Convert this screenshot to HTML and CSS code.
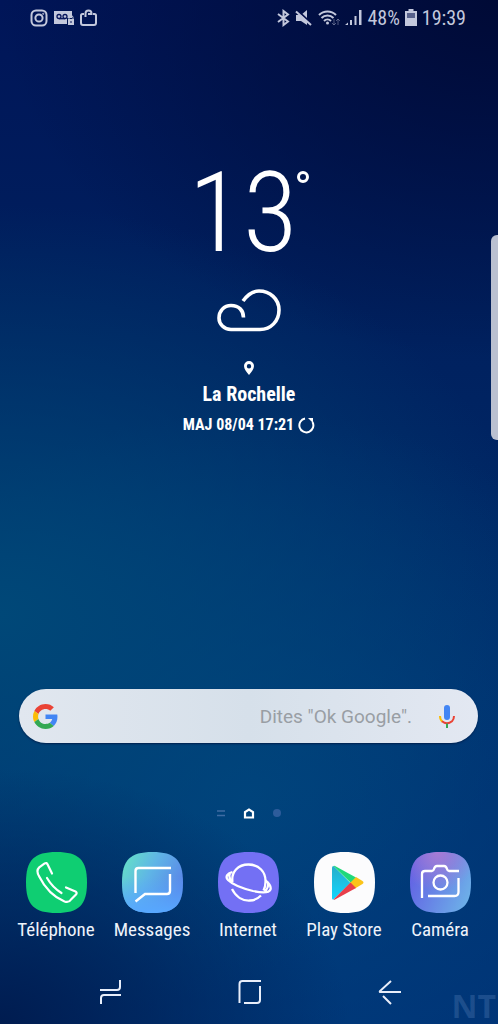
FILE: index.html
```html
<!DOCTYPE html>
<html lang="fr">
<head>
<meta charset="utf-8">
<meta name="viewport" content="width=device-width, initial-scale=1">
<title>Accueil</title>
<link rel="stylesheet" href="styles.css">
</head>
<body>
<div class="screen">
  <header class="status">
    <div class="status-group">
      <svg width="18" height="18" viewBox="0 0 18 18" fill="none" stroke="currentColor" stroke-width="2"><rect x="1.5" y="1.5" width="15" height="15" rx="4.5"/><circle cx="9" cy="9" r="3.6"/><circle cx="13.2" cy="4.8" r=".6" stroke-width="1"/></svg>
      <svg width="20" height="18" viewBox="0 0 20 18"><path d="M0 2h18v7h-5v6H0z" fill="currentColor"/><g fill="none" stroke="#06145a" stroke-width="1.3"><circle cx="5" cy="7.5" r="2"/><circle cx="11" cy="7.5" r="2"/><path d="M5 9.7h6"/></g><path d="M14 10h6v6h-6z" fill="currentColor"/><path d="M15 10V8.5a2 2 0 0 1 4 0V10" fill="none" stroke="currentColor"/><path d="M16.5 12h1v2h-1z" fill="#06145a"/></svg>
      <svg width="17" height="18" viewBox="0 0 17 18" fill="none" stroke="currentColor" stroke-width="2"><path d="M4 5H2.500Q1 5 1 6.500V14q0 2 2 2h11q2 0 2-2V6.500Q16 5 14.500 5H13M5.500 8V4.500a3 3 0 0 1 6 0V5H8"/></svg>
    </div>
    <div class="status-group status-right">
      <svg width="13" height="18" viewBox="0 0 13 18" fill="none" stroke="currentColor" stroke-width="2"><path d="M1 5l10 7.500L6.500 16V2L11 5.500 1 13"/></svg>
      <svg width="18" height="18" viewBox="0 0 18 18"><path d="M1 6h5l6-5v15l-6-4H1z" fill="currentColor"/><path d="M3 2l14 13" stroke="#040f48" stroke-width="2"/><path d="M1 2.500L16 16" stroke="currentColor" stroke-width="2"/></svg>
      <svg width="22" height="18" viewBox="0 0 22 18" fill="none" stroke="currentColor" stroke-width="2"><path d="M1 6a12 12 0 0 1 17 0M3.500 9a8.500 8.500 0 0 1 12 0M6 12a5 5 0 0 1 7 0"/><circle cx="9.500" cy="14" r="1.500" fill="currentColor" stroke="none"/><path d="M16 10v6M14 14l2 2 2-2M20 16v-6M18 12l2-2 2 2" stroke-width="1" opacity=".4"/></svg>
      <svg width="17" height="18" viewBox="0 0 17 18" fill="currentColor"><path d="M0 16h3v-2.500zM5 16h2v-5H5zM9.500 16h2V7h-2zM14 16h2.500V1H14z"/></svg>
      <span>48%</span>
      <svg width="12" height="18" viewBox="0 0 12 18"><path d="M3.500 0h5v2H12v15H0V2h3.500z" fill="currentColor"/><path d="M2 4h8v5H2z" fill="#57618b"/></svg>
      <time>19:39</time>
    </div>
  </header>

  <main class="home">
    <section class="weather" aria-label="Météo">
      <div class="temp">13<span class="degree" aria-label="degrés"></span></div>
      <svg class="cloud" width="64" height="44" viewBox="0 0 64 44" fill="none" stroke="currentColor" stroke-width="3.600"><path d="M26 12C31 5 37 2 42 2c11 0 20 8 20 19 0 11-8 19.500-19 19.500H14C7 40.500 2 35 2 29c0-7 5-12.500 12-12.500 8 0 12.500 5 12.500 12"/></svg>
      <svg class="pin" width="12" height="14" viewBox="0 0 12 14"><path fill="currentColor" fill-rule="evenodd" d="M6 0a5 5 0 0 1 5 5c0 3-2.500 6-5 9-2.500-3-5-6-5-9a5 5 0 0 1 5-5zm0 3a2.200 2.200 0 1 0 0 4.400A2.200 2.200 0 0 0 6 3z"/></svg>
      <div class="city">La Rochelle</div>
      <button class="update" type="button">MAJ 08/04 17:21
        <svg width="17" height="17" viewBox="0 0 17 17" fill="none" stroke="currentColor" stroke-width="2"><path d="M7 1.500A7 7 0 1 0 14.500 5"/><path d="M10 1h5v5z" fill="currentColor" stroke="none"/></svg>
      </button>
    </section>

    <form class="search">
      <svg width="25" height="25" viewBox="0 0 48 48" aria-hidden="true"><path fill="#ea4335" d="M24 9.500c3.540 0 6.710 1.220 9.210 3.600l6.850-6.850C35.900 2.380 30.470 0 24 0 14.620 0 6.510 5.380 2.560 13.220l7.980 6.190C12.430 13.720 17.740 9.500 24 9.500z"/><path fill="#4285f4" d="M46.980 24.550c0-1.570-.15-3.090-.38-4.550H24v9.020h12.940c-.58 2.960-2.260 5.480-4.780 7.180l7.730 6c4.510-4.180 7.090-10.360 7.090-17.650z"/><path fill="#fbbc05" d="M10.530 28.590A14.500 14.500 0 0 1 9.770 24c0-1.600.27-3.140.76-4.590l-7.980-6.190A23.900 23.900 0 0 0 0 24c0 3.880.92 7.540 2.560 10.780z"/><path fill="#34a853" d="M24 48c6.480 0 11.930-2.130 15.890-5.810l-7.730-6c-2.150 1.450-4.920 2.300-8.160 2.300-6.260 0-11.570-4.220-13.470-9.910l-7.980 6.190C6.510 42.620 14.620 48 24 48z"/></svg>
      <input class="search-input" type="text" aria-label="Recherche Google" placeholder="Dites &quot;Ok Google&quot;.">
      <button class="mic" type="button" aria-label="Recherche vocale">
        <svg width="16" height="23" viewBox="0 0 16 23"><rect x="5" y="0" width="6" height="15" rx="3" fill="#4285f4"/><path d="M1 11c0 3 1 4.500 2.500 5.700" fill="none" stroke="#fbbc05" stroke-width="2"/><path d="M3 16.300c3 2.500 7 2.500 10 0 1.300-1.300 2-3 2-5.300" fill="none" stroke="#ea4335" stroke-width="2"/><path d="M8 18.500V23" stroke="#34a853" stroke-width="2"/></svg>
      </button>
    </form>

    <div class="pages">
      <svg width="10" height="12" viewBox="0 0 10 12" stroke="#3f6ca3" stroke-width="1.500"><path d="M1 4h8M1 8.500h8"/></svg>
      <svg width="12" height="12" viewBox="0 0 12 12" fill="none" stroke="currentColor" stroke-width="2.200"><path d="M2 10.500V5.200L6 2.500l4 2.700v5.300z"/></svg>
      <svg width="10" height="12" viewBox="0 0 10 12"><circle cx="5" cy="6" r="4" fill="#2d5c9b"/></svg>
    </div>

    <nav class="dock" aria-label="Applications">
      <a class="app" href="#telephone">
        <svg class="icon" viewBox="0 0 61 61" fill="none" stroke="#fff" stroke-width="2.200" stroke-linecap="round" stroke-linejoin="round"><path stroke="none" fill="#0fce72" d="M30.500 0C53 0 61 8 61 30.500S53 61 30.500 61 0 53 0 30.500 8 0 30.500 0z"/><path d="M26 21.500l-4.500-9.300q-1-1.800-2.800-.8l-5.500 4q-3.500 3.500 0 9C18 34 27 44.500 38.500 49.500q4.500 1.500 6.500-2l5-5q1.500-1.800-.5-3L40 35.500M21 26c3.500 6 8 11 14.500 15"/></svg>
        <span>Téléphone</span>
      </a>
      <a class="app" href="#messages">
        <svg class="icon" viewBox="0 0 61 61" fill="none" stroke="#fff" stroke-width="2.400"><defs><linearGradient id="msg-a" x1="0" y1="0" x2="1" y2=".5"><stop offset=".1" stop-color="#64dcca"/><stop offset=".5" stop-color="#5fb5e6"/><stop offset="1" stop-color="#5a86e8"/></linearGradient><linearGradient id="msg-b" x1="0" y1="0" x2="0" y2="1"><stop offset=".4" stop-color="#57a8ff" stop-opacity="0"/><stop offset="1" stop-color="#57a8ff"/></linearGradient></defs><path stroke="none" fill="url(#msg-a)" d="M30.500 0C53 0 61 8 61 30.500S53 61 30.500 61 0 53 0 30.500 8 0 30.500 0z"/><path stroke="none" fill="url(#msg-b)" d="M30.500 0C53 0 61 8 61 30.500S53 61 30.500 61 0 53 0 30.500 8 0 30.500 0z"/><path d="M13.500 41V19q0-3 3-3H49M48 22v17q0 3-3 3H23l-9.500 7.500"/></svg>
        <span>Messages</span>
      </a>
      <a class="app" href="#internet">
        <svg class="icon" viewBox="0 0 61 61" fill="none" stroke="#fff" stroke-width="2.300"><path stroke="none" fill="#7370f4" d="M30.500 0C53 0 61 8 61 30.500S53 61 30.500 61 0 53 0 30.500 8 0 30.500 0z"/><path d="M14.500 30C13 20 20 12.500 30.500 12.500S48 20 47.500 30q0 5-2 8.500"/><path d="M14.500 20C9 21.500 7 25 10 28c5 5 15 8.500 25 11 9 2 16 2 17.500-1.500 1-3-2-6.500-5-9M12 21.500c-1.500 2.500 0 6 2 8.500M49.500 30c1.500 3 0 7-3 9.500M14 37c4 8 11 12 18 11.500 5 0 8-2 11-5"/></svg>
        <span>Internet</span>
      </a>
      <a class="app" href="#play-store">
        <svg class="icon" viewBox="0 0 61 61"><defs><linearGradient id="play" x1="0" y1="0" x2="0" y2="1"><stop stop-color="#27aec9"/><stop offset="1" stop-color="#12d5ff"/></linearGradient></defs><path fill="#fcfcfd" d="M30.500 0C53 0 61 8 61 30.500S53 61 30.500 61 0 53 0 30.500 8 0 30.500 0z"/><path d="M18 15.500v30.500q0 2 1.500 1.500l17-16.500-17-17q-1.500 0-1.500 1.500z" fill="url(#play)"/><path d="M19.500 14l17.500 17 5-5.500L21 14q-1-.5-1.500 0z" fill="#20d97b"/><path d="M42 25l6.500 4q2 1.500 0 3L41 36.500 36 31z" fill="#fbc419"/><path d="M36.500 30.500L42 36 21 47.500q-1 .5-1.500 0z" fill="#e83f4b"/></svg>
        <span>Play Store</span>
      </a>
      <a class="app" href="#camera">
        <svg class="icon" viewBox="0 0 61 61" fill="none" stroke="#fff" stroke-width="2.300"><defs><linearGradient id="cam-a" x1="0" y1=".3" x2="1" y2=".7"><stop stop-color="#6260e4"/><stop offset="1" stop-color="#6db0e8"/></linearGradient><radialGradient id="cam-b" cx=".45" cy="0" r=".65"><stop stop-color="#a87bd4"/><stop offset="1" stop-color="#a87bd4" stop-opacity="0"/></radialGradient></defs><path stroke="none" fill="url(#cam-a)" d="M30.500 0C53 0 61 8 61 30.500S53 61 30.500 61 0 53 0 30.500 8 0 30.500 0z"/><path stroke="none" fill="url(#cam-b)" d="M30.500 0C53 0 61 8 61 30.500S53 61 30.500 61 0 53 0 30.500 8 0 30.500 0z"/><path d="M12 46V22q0-3 3-3h7q1.500 0 2-2 .8-3 3-3h7q2.200 0 3 3 .5 2 2 2h10M48.500 26v14q0 4-4 4H18"/><circle cx="30.500" cy="30.500" r="7"/></svg>
        <span>Caméra</span>
      </a>
    </nav>
  </main>

  <footer class="navbar">
    <button type="button" aria-label="Applications récentes"><svg width="24" height="26" viewBox="0 0 24 26"><path d="M2 11h17q3 0 3-3V1M23 16H6q-3 0-3 3v6"/></svg></button>
    <button type="button" aria-label="Accueil"><svg width="24" height="26" viewBox="0 0 24 26"><path d="M1.500 24V5q0-3 3-3H23M22 7v14q0 3-3 3H6"/></svg></button>
    <button type="button" aria-label="Retour"><svg width="24" height="26" viewBox="0 0 24 26"><path d="M13 2L2 12q-.5 1 0 1h21M5 17l8 8"/></svg></button>
  </footer>
  <div class="edge"></div>
  <div class="watermark" aria-hidden="true">NT</div>
</div>
</body>
</html>
```
FILE: styles.css
```css
* { box-sizing: border-box; }

body {
  margin: 0;
  font-family: "Roboto Condensed", Roboto, sans-serif;
  color: #fff;
}

svg { display: block; flex: none; }

button {
  border: 0;
  padding: 0;
  background: none;
  color: inherit;
  font: inherit;
}

.screen {
  position: relative;
  display: flex;
  flex-direction: column;
  min-height: 100vh;
  overflow: hidden;
  background:
    radial-gradient(ellipse 70% 25% at 0% 100%, #001c50 0%, #001c5000 100%),
    radial-gradient(ellipse 110% 40% at 0% 60%, #004878 0%, #00487800 100%),
    radial-gradient(ellipse 90% 38% at 50% 78%, #00417e 0%, #00417e00 100%),
    radial-gradient(ellipse 100% 35% at 100% 0%, #000a36 0%, #000a3600 100%),
    linear-gradient(180deg, #001558 0%, #00205e 30%, #002a68 60%, #003276 100%);
}

.status {
  display: flex;
  justify-content: space-between;
  align-items: center;
  height: 36px;
  padding: 0 32px 0 30px;
  color: #c3c8dc;
  font-size: 20px;
}

.status-group { display: flex; align-items: center; gap: 6px; }
.status-right { gap: 5px; }

.home { flex: 1; display: flex; flex-direction: column; }

.weather {
  display: flex;
  flex-direction: column;
  align-items: center;
  padding-top: 121px;
}

.temp {
  display: flex;
  font-weight: 300;
  font-size: 112px;
  line-height: 112px;
}

.degree {
  width: 12px;
  height: 12px;
  margin-top: 14px;
  border: 3px solid #fff;
  border-radius: 50%;
}

.cloud { margin-top: 20px; }
.pin { margin-top: 28px; }

.city {
  margin-top: 7px;
  font-size: 20px;
  line-height: 24px;
  font-weight: 700;
}

.update {
  display: flex;
  align-items: center;
  gap: 4px;
  margin-top: 9px;
  font-size: 16px;
  line-height: 20px;
  font-weight: 700;
}

.search {
  display: flex;
  align-items: center;
  gap: 27px;
  height: 54px;
  margin: auto 20px 0 19px;
  padding: 0 23px 0 14px;
  border-radius: 27px;
  background: linear-gradient(90deg, #e1e7ef, #d6e0ea 50%, #e3e8f2);
  box-shadow: 0 1px 2px #00204d;
}

.search-input {
  flex: 1;
  min-width: 0;
  border: 0;
  padding: 0;
  background: none;
  font-family: Roboto, sans-serif;
  font-size: 19px;
  text-align: right;
  color: #444;
}

.search-input::placeholder { color: #999ea4; opacity: 1; }

.pages {
  display: flex;
  justify-content: center;
  align-items: center;
  gap: 17px;
  padding: 64px 0 33px;
}

.dock {
  display: grid;
  grid-template-columns: repeat(5, 1fr);
  padding: 0 10px 0 8px;
}

.app {
  display: flex;
  flex-direction: column;
  align-items: center;
  gap: 5px;
  color: #eef3fb;
  text-decoration: none;
  font-size: 19px;
  line-height: 24px;
  white-space: nowrap;
}

.icon { width: 61px; height: 61px; }

.navbar {
  display: grid;
  grid-template-columns: repeat(3, 1fr);
  height: 64px;
  margin-top: 18px;
  padding: 0 38px 0 40px;
}

.navbar button { display: grid; place-items: center; }
.navbar svg { fill: none; stroke: #e8eefa; stroke-width: 2; }

.edge {
  position: absolute;
  top: 235px;
  right: 0;
  width: 7px;
  height: 205px;
  border-radius: 6px 0 0 6px;
  background: #bac0d0;
}

.watermark {
  position: absolute;
  right: 2px;
  bottom: 0;
  font-family: "Open Sans", sans-serif;
  font-weight: 700;
  font-size: 32px;
  line-height: 36px;
  color: #7398cc40;
}
```
